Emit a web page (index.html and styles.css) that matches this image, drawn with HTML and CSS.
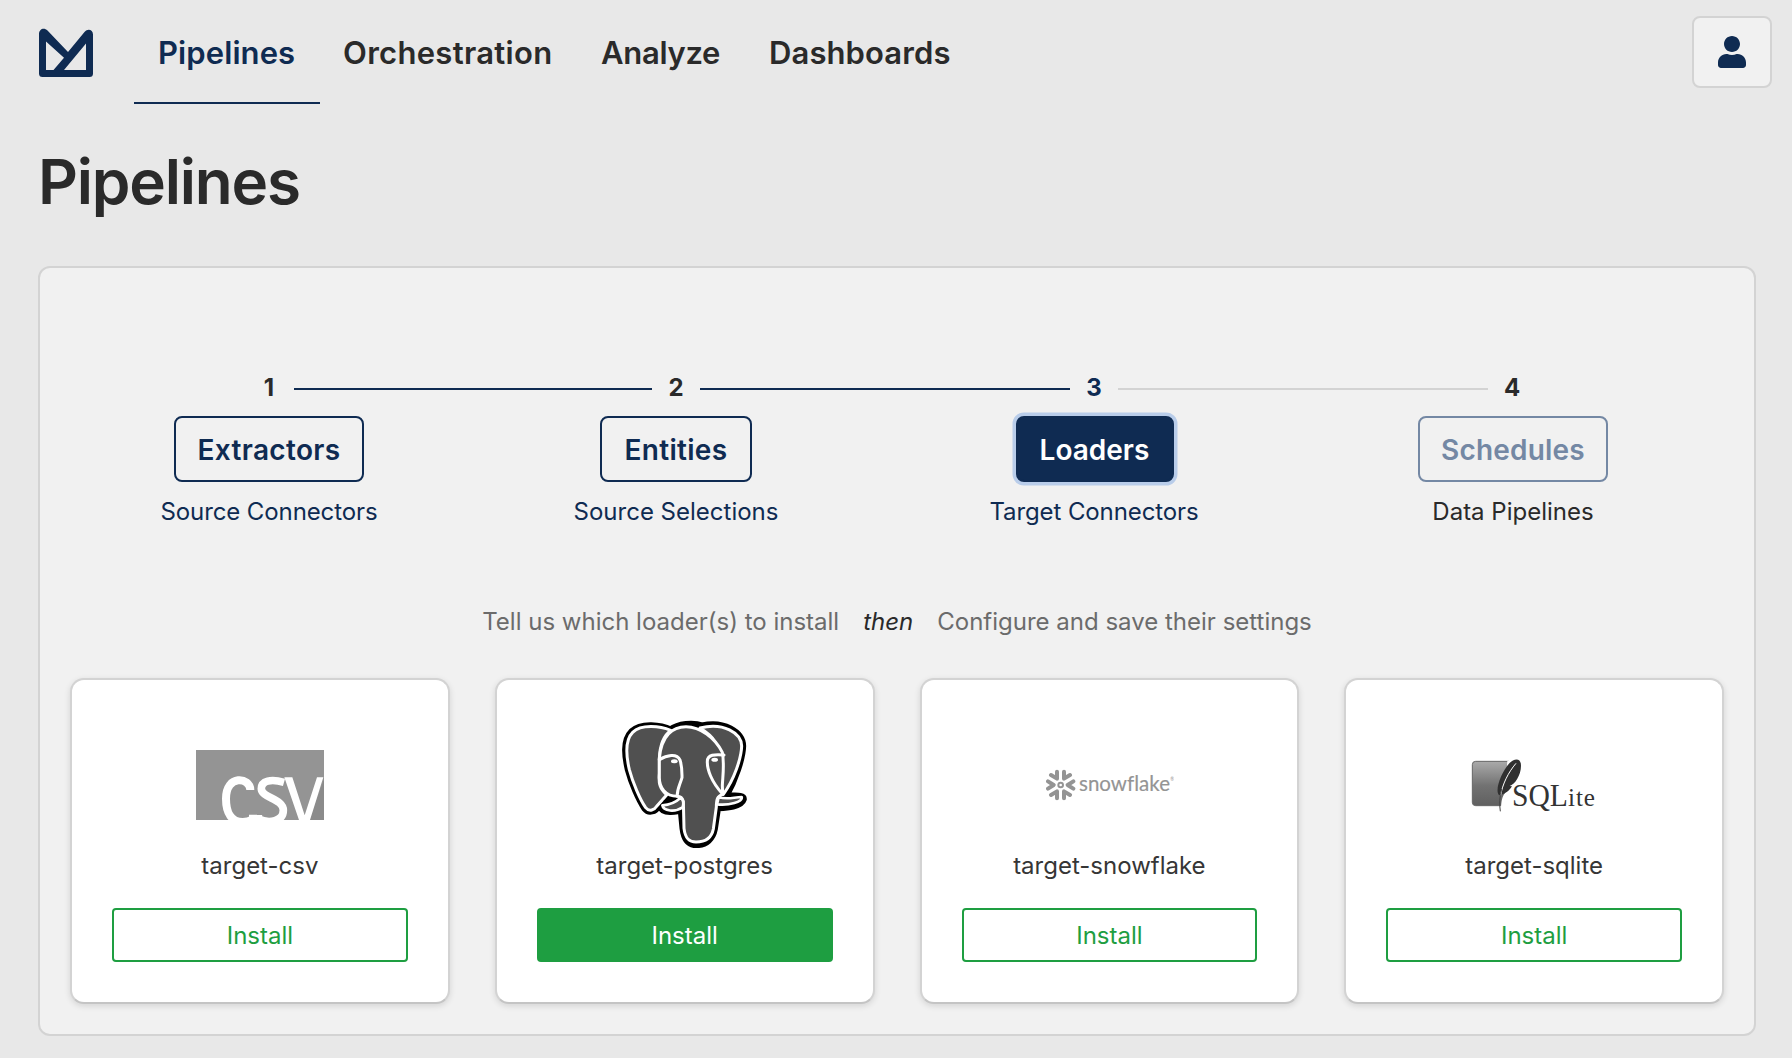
FILE: index.html
```html
<!DOCTYPE html>
<html lang="en">
<head>
<meta charset="utf-8">
<title>Pipelines</title>
<link rel="stylesheet" href="styles.css">
</head>
<body>
<header class="navbar">
  <svg class="logo" viewBox="0 0 54 48" aria-label="Home"><path fill="#0f2b52" fill-rule="evenodd" d="M0 5C0 0 5-2 8.500 1.500L29 23 45.500 3C49-1 54 1 54 5.500V44.500Q54 48 50.500 48H3.500Q0 48 0 44.500ZM7 12.500V41H14.500L25 28.800ZM25 41H47V14.500Z"/></svg>
  <nav class="nav">
    <a class="nav-item active n1">Pipelines</a>
    <a class="nav-item n2">Orchestration</a>
    <a class="nav-item n3">Analyze</a>
    <a class="nav-item n4">Dashboards</a>
  </nav>
  <button class="user" aria-label="User"><svg viewBox="0 0 448 512" width="28" height="32"><path fill="#0f2b52" d="M224 256c70.700 0 128-57.300 128-128S294.700 0 224 0 96 57.300 96 128s57.300 128 128 128zm89.600 32h-16.700c-22.200 10.200-46.900 16-72.900 16s-50.600-5.800-72.900-16h-16.700C60.200 288 0 348.200 0 422.400V464c0 26.500 21.500 48 48 48h352c26.500 0 48-21.500 48-48v-41.600c0-74.200-60.200-134.400-134.400-134.400z"/></svg></button>
</header>
<main class="main">
  <h1 class="title">Pipelines</h1>
  <section class="panel">
    <div class="track">
      <span class="num">1</span><i class="line"></i><span class="num">2</span><i class="line"></i><span class="num current">3</span><i class="line pending"></i><span class="num">4</span>
    </div>
    <div class="steps">
      <div class="step"><button class="step-btn s1">Extractors</button><span class="step-label l1">Source Connectors</span></div>
      <div class="step"><button class="step-btn s2">Entities</button><span class="step-label l2">Source Selections</span></div>
      <div class="step"><button class="step-btn focused s3">Loaders</button><span class="step-label l3">Target Connectors</span></div>
      <div class="step"><button class="step-btn disabled s4">Schedules</button><span class="step-label plain l4">Data Pipelines</span></div>
    </div>
    <p class="hint"><span>Tell us which loader(s) to install</span><em>then</em><span>Configure and save their settings</span></p>
    <div class="cards">
      <article class="card">
        <div class="pic"><svg width="128" height="70" viewBox="0 0 384 210"><rect width="384" height="210" fill="#949494"/><path fill="#8b8b8b" d="M384 88V210H340z"/><g fill="none" stroke="#fff"><path stroke-width="24" d="M163 120C163 82 90 72 90 146C90 190 108 216 140 216C153 216 163 212 171 208V194"/><path stroke-width="23" d="M264 97C225 86 196 92 196 116C196 144 262 145 262 181C262 214 220 222 187 207V195"/></g><path fill="#fff" d="M265 82H289L326 196 363 82H382L342 210H309Z"/></svg></div>
        <p class="name">target-csv</p><button class="install">Install</button>
      </article>
      <article class="card">
        <div class="pic elephant"><svg width="128" height="128" viewBox="60 45 384 384" stroke-linejoin="round" stroke-linecap="round">
          <path fill="#000" stroke="#000" stroke-width="27" d="M212 78C182 64 125 56 98 82C72 108 79 155 88 194C98 232 120 283 137 308C148 322 164 314 170 304L196 274C202 276 212 275 216 276C208 288 193 297 187 306C190 320 226 320 246 308L252 370C256 403 269 416 288 416C318 416 335 398 340 372L350 306C376 304 421 302 427 282C427 272 390 280 375 272C403 222 424 159 425 123C424 84 370 51 307 66C278 56 237 60 212 78Z"/>
          <path fill="#505050" stroke="#fff" stroke-width="9" d="M212 76C182 64 125 56 98 82C72 108 79 155 88 194C98 232 120 283 137 308C148 322 164 314 170 304L200 270C180 250 175 238 178 205L178 160C180 112 193 90 212 76Z"/>
          <path fill="#505050" stroke="#fff" stroke-width="9" d="M300 69C370 51 424 84 425 123C424 159 403 222 370 268L350 200C366 110 334 90 300 69Z"/>
          <path fill="#505050" stroke="#fff" stroke-width="9" d="M178 160C184 91 218 65 258 65C300 65 345 98 367 142C374 180 368 214 367 242L368 268C352 273 349 282 349 306L340 372C335 398 318 411 288 411C269 411 256 403 252 370L250 289C247 278 240 274 232 274C196 274 178 247 178 218Z"/>
          <path fill="none" stroke="#fff" stroke-width="9" d="M178 164C200 151 230 144 240 165C247 186 246 210 246 218C239 242 230 255 232 274M372 150C345 147 322 149 322 169C321 193 334 230 367 266"/>
          <path fill="#505050" stroke="#fff" stroke-width="8" d="M241 279C225 294 205 300 187 301C190 319 225 322 248 307C252 293 249 283 241 279ZM356 276C380 285 399 277 425 276C430 291 386 302 351 298Z"/>
          <path d="M190 288L207 276 222 283 208 292Z"/><g fill="#fff"><ellipse cx="223" cy="169" rx="10" ry="6"/><ellipse cx="344" cy="164" rx="10" ry="6"/></g>
        </svg></div>
        <p class="name">target-postgres</p><button class="install filled">Install</button>
      </article>
      <article class="card">
        <div class="pic snowflake"><svg width="128" height="32" viewBox="48 42 384 96"><g fill="none" stroke="#949494" stroke-width="12" stroke-linecap="round" stroke-linejoin="round"><path d="M81 50V71L63 60M102 50V71L120 60M81 130V109L63 120M102 130V109L120 120M54 79L71 90 54 101M130 79L113 90 130 101"/><circle cx="92" cy="90" r="7" stroke-width="6"/></g><text class="wordmark" x="147" y="107" font-size="62" fill="#949494" stroke="#949494" textLength="273" lengthAdjust="spacingAndGlyphs">snowflake</text><text x="421" y="79" font-family="Lato, sans-serif" font-size="14" fill="#949494">®</text></svg></div>
        <p class="name">target-snowflake</p><button class="install">Install</button>
      </article>
      <article class="card">
        <div class="pic sqlite"><svg width="128" height="56" viewBox="34 36 384 168"><defs><linearGradient id="box" x2="0" y2="1"><stop stop-color="#aaa"/><stop offset=".55" stop-color="#727272"/><stop offset="1" stop-color="#606060"/></linearGradient></defs><rect x="38" y="49" width="120" height="133" rx="10" fill="url(#box)" stroke="#666" stroke-width="3"/><path fill="#fff" d="M143 47H170V188H124C125 168 128 153 136 145Z"/><path fill="#303030" d="M118 150C104 136 126 80 149 55C163 40 184 37 184 62C184 90 166 118 150 123L157 124C148 140 135 145 123 151Z"/><path fill="none" stroke="#fff" stroke-width="3" d="M169 55C145 83 128 119 123 151"/><path fill="none" stroke="#444" stroke-width="3" d="M126 132C119 155 119 179 122 199"/><text x="157" y="182" font-family="Liberation Serif, serif" fill="#333" font-size="92" textLength="252" lengthAdjust="spacingAndGlyphs">SQL<tspan font-size="78" letter-spacing="3">ite</tspan></text></svg></div>
        <p class="name">target-sqlite</p><button class="install">Install</button>
      </article>
    </div>
  </section>
</main>
</body>
</html>
```
FILE: styles.css
```css
* { box-sizing: border-box; }
body {
  margin: 0;
  height: 1058px;
  background: #e8e8e8;
  color: #2a2a2a;
  font-family: Inter, sans-serif;
  font-size: 24px;
  overflow: hidden;
}
button { font-family: inherit; margin: 0; padding: 0; }
.navbar { display: flex; height: 104px; padding: 0 20px 0 39px; }
.logo { width: 54px; height: 48px; margin-top: 29px; overflow: visible; }
.nav { display: flex; margin-left: 41px; flex: 1; }
.nav-item {
  height: 104px;
  padding-left: 23px;
  line-height: 106px;
  font-size: 31px;
  font-weight: 600;
  white-space: nowrap;
}
.n1 { width: 186px; padding-left: 24px; letter-spacing: .1px; }
.n2 { width: 257px; letter-spacing: .3px; }
.n3 { width: 168px; padding-left: 24px; letter-spacing: -.3px; }
.n4 { padding-left: 24px; letter-spacing: .1px; }
.active { color: #0f2b52; border-bottom: 2px solid #0f2b52; }
.user {
  display: flex;
  align-items: center;
  justify-content: center;
  width: 80px;
  height: 72px;
  margin-top: 16px;
  background: #f1f1f1;
  border: 2px solid #d3d3d3;
  border-radius: 8px;
}
.main { padding: 0 36px 0 38px; }
.title {
  margin: 0;
  padding: 42px 0 0;
  height: 162px;
  line-height: 72px;
  font-size: 62px;
  font-weight: 600;
  letter-spacing: -1.2px;
}
.panel {
  height: 770px;
  border: 2px solid #d3d3d3;
  border-radius: 12px;
  background: #f1f1f1;
  padding: 107px 30px 0;
}
.track {
  display: grid;
  grid-template-columns: 48px 358px 48px 370px 48px 370px 48px;
  align-items: center;
  height: 26px;
  padding-left: 176px;
}
.num { text-align: center; font-weight: 700; font-size: 24px; line-height: 26px; }
.num:first-child { padding-right: 2px; }
.current { color: #0f2b52; }
.line { height: 2px; margin-top: 2px; background: #0f2b52; }
.pending { background: #d3d3d3; }
.steps { display: grid; grid-template-columns: 407px 419px 418px 240px; padding-left: 79px; margin-top: 15px; }
.step { width: 240px; display: flex; flex-direction: column; align-items: center; }
.step-btn {
  height: 66px;
  border: 2px solid #0f2b52;
  border-radius: 8px;
  background: transparent;
  color: #0f2b52;
  font-size: 28px;
  line-height: 36px;
  padding-top: 2px;
  font-weight: 600;
}
.s1, .s4 { width: 190px; }
.s1 { letter-spacing: .35px; }
.s2 { width: 152px; letter-spacing: .3px; }
.s3 { width: 158px; padding-right: 1px; }
.focused { background: #0f2b52; color: #fff; box-shadow: 0 0 0 3.500px #b9cdea; }
.disabled { color: #7488a4; border-color: #7488a4; letter-spacing: .2px; }
.step-label { margin-top: 12px; line-height: 36px; color: #0f2b52; white-space: nowrap; }
.l1, .l3 { letter-spacing: -.1px; }
.l3 { padding-right: 2px; }
.step-label.plain { color: #2a2a2a; }
.hint { display: flex; justify-content: center; gap: 24px; margin: 74px 0 0; line-height: 36px; color: #6b6b6b; white-space: nowrap; }
.hint em { color: #2a2a2a; }
.cards { display: grid; grid-template-columns: repeat(4, 1fr); gap: 45px; margin-top: 38px; }
.card {
  height: 326px;
  padding: 40px;
  border: 2px solid #d3d3d3;
  border-bottom-color: #c4c4c4;
  border-radius: 14px;
  background: #fff;
  box-shadow: 0 2px 6px rgba(0, 0, 0, .12);
}
.pic { display: flex; align-items: center; justify-content: center; height: 128px; padding-top: 2px; }
.elephant { padding: 0 2px 0 0; }
.snowflake { padding-left: 2px; }
.wordmark { font-family: Lato, sans-serif; font-variant-ligatures: none; stroke-width: .5px; }
.sqlite { padding-left: 1px; }
.name { margin: 0; line-height: 36px; text-align: center; color: #363636; }
.install {
  display: block;
  width: 100%;
  height: 54px;
  margin-top: 24px;
  border: 2px solid #1e9e41;
  border-radius: 4px;
  background: #fff;
  color: #1e9e41;
  font-size: 24px;
}
.filled { background: #1e9e41; color: #fff; }
```
